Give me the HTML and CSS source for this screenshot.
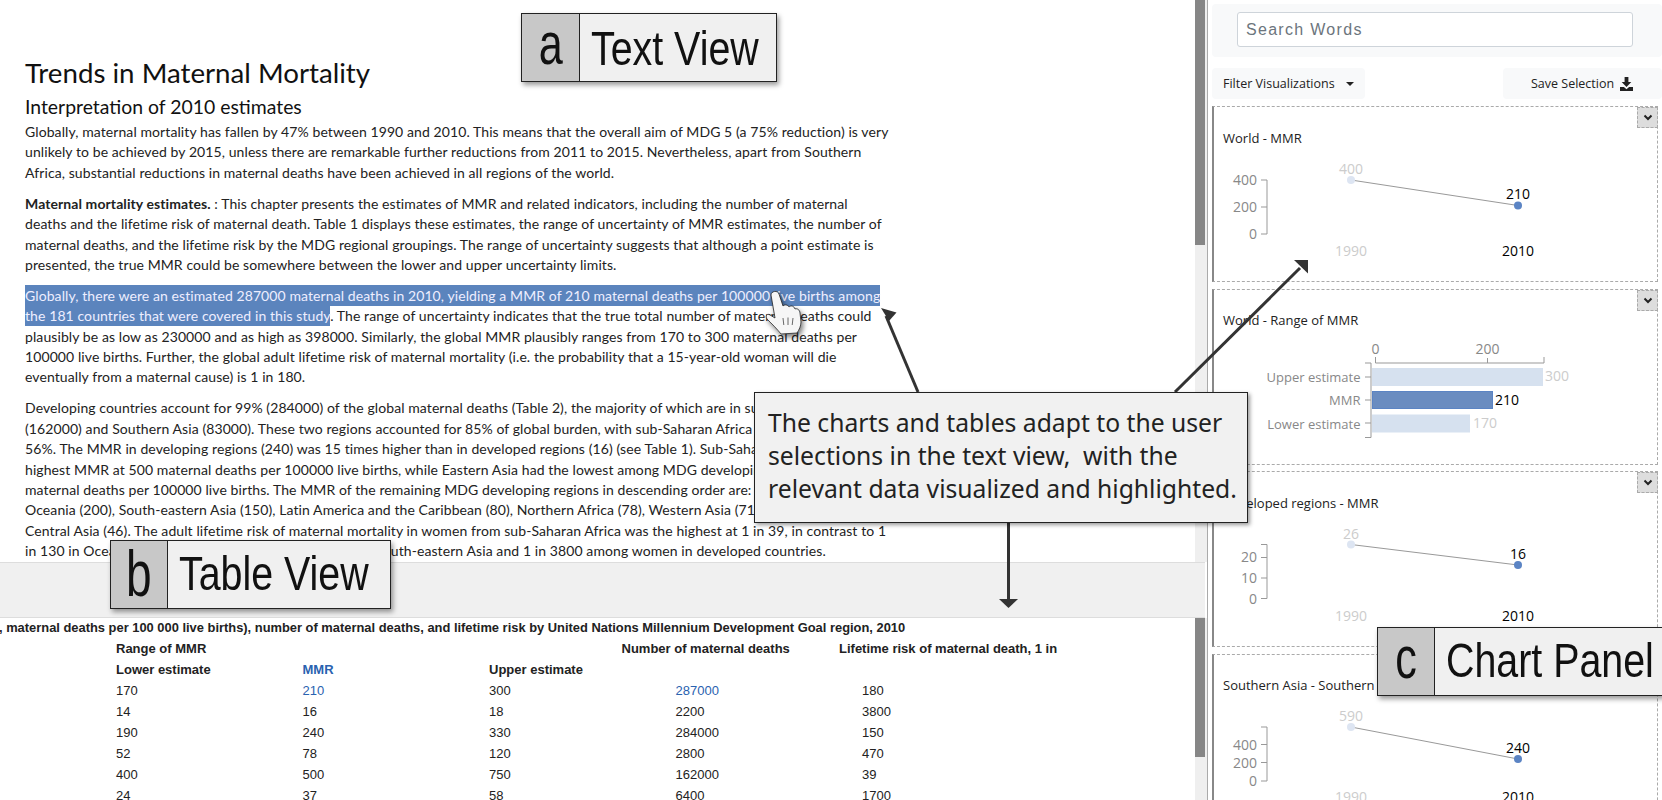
FILE: index.html
```html
<!DOCTYPE html>
<html lang="en">
<head>
    <meta charset="UTF-8">
    <title>Text View, Table View and Chart Panel</title>
    <link rel="stylesheet" href="styles.css">
</head>
<body>

<div class="page">
    <div class="main">
        <!-- Text view -->
        <div class="text-view">
            <div class="article">
                <h1>Trends in Maternal Mortality</h1>
                <h2>Interpretation of 2010 estimates</h2>
                <p>Globally, maternal mortality has fallen by 47% between 1990 and 2010. This means that the overall aim of MDG 5 (a 75% reduction) is very<br>
                unlikely to be achieved by 2015, unless there are remarkable further reductions from 2011 to 2015. Nevertheless, apart from Southern<br>
                Africa, substantial reductions in maternal deaths have been achieved in all regions of the world.</p>
                <p><b>Maternal mortality estimates.</b> : This chapter presents the estimates of MMR and related indicators, including the number of maternal<br>
                deaths and the lifetime risk of maternal death. Table 1 displays these estimates, the range of uncertainty of MMR estimates, the number of<br>
                maternal deaths, and the lifetime risk by the MDG regional groupings. The range of uncertainty suggests that although a point estimate is<br>
                presented, the true MMR could be somewhere between the lower and upper uncertainty limits.</p>
                <p><span class="selected">Globally, there were an estimated 287000 maternal deaths in 2010, yielding a MMR of 210 maternal deaths per 100000 live births among<br>
                the 181 countries that were covered in this study</span>. The range of uncertainty indicates that the true total number of maternal deaths could<br>
                plausibly be as low as 230000 and as high as 398000. Similarly, the global MMR plausibly ranges from 170 to 300 maternal deaths per<br>
                100000 live births. Further, the global adult lifetime risk of maternal mortality (i.e. the probability that a 15-year-old woman will die<br>
                eventually from a maternal cause) is 1 in 180.</p>
                <p>Developing countries account for 99% (284000) of the global maternal deaths (Table 2), the majority of which are in sub-Saharan Africa<br>
                (162000) and Southern Asia (83000). These two regions accounted for 85% of global burden, with sub-Saharan Africa alone accounting for<br>
                56%. The MMR in developing regions (240) was 15 times higher than in developed regions (16) (see Table 1). Sub-Saharan Africa had the<br>
                highest MMR at 500 maternal deaths per 100000 live births, while Eastern Asia had the lowest among MDG developing regions, at 37<br>
                maternal deaths per 100000 live births. The MMR of the remaining MDG developing regions in descending order are: Southern Asia (220),<br>
                Oceania (200), South-eastern Asia (150), Latin America and the Caribbean (80), Northern Africa (78), Western Asia (71), Caucasus and<br>
                Central Asia (46). The adult lifetime risk of maternal mortality in women from sub-Saharan Africa was the highest at 1 in 39, in contrast to 1<br>
                in 130 in Oceania, 1 in 160 in Southern Asia, 1 in 290 in South-eastern Asia and 1 in 3800 among women in developed countries.</p>
            </div>
            <div class="scrollbar"><div class="thumb thumb-text"></div></div>
        </div>

        <div class="table-bar"></div>

        <!-- Table view -->
        <div class="table-view">
            <div class="table-scroll">
                <div class="caption">, maternal deaths per 100 000 live births), number of maternal deaths, and lifetime risk by United Nations Millennium Development Goal region, 2010</div>
                <div class="grid">
                    <b>Range of MMR</b><span></span><span></span><b class="deaths-head">Number of maternal deaths</b><b class="risk-head">Lifetime risk of maternal death, 1 in</b>
                    <b>Lower estimate</b><b class="blue">MMR</b><b>Upper estimate</b><span></span><span></span>
                    <span>170</span><span class="blue">210</span><span>300</span><span class="blue">287000</span><span>180</span>
                    <span>14</span><span>16</span><span>18</span><span>2200</span><span>3800</span>
                    <span>190</span><span>240</span><span>330</span><span>284000</span><span>150</span>
                    <span>52</span><span>78</span><span>120</span><span>2800</span><span>470</span>
                    <span>400</span><span>500</span><span>750</span><span>162000</span><span>39</span>
                    <span>24</span><span>37</span><span>58</span><span>6400</span><span>1700</span>
                </div>
            </div>
            <div class="scrollbar"><div class="thumb thumb-table"></div></div>
        </div>
    </div>

    <!-- Chart panel -->
    <div class="panel">
        <div class="search-box">
            <input type="text" class="search" placeholder="Search Words">
        </div>
        <div class="toolbar">
            <div class="tool-btn">Filter Visualizations <span class="caret"></span></div>
            <div class="tool-btn save-btn">Save Selection
                <svg class="save-icon" width="13" height="14" viewBox="0 0 13 14"><path d="M4.600 0h3.800v5h2.900L6.500 9.900 1.700 5h2.900z M0 10h3.900l2.600 2.300L9.100 10H13v4H0z" fill="#222"/></svg>
            </div>
        </div>

        <div class="card card-1">
            <div class="chevron"><svg width="10" height="7" viewBox="0 0 10 7"><path d="M1.500 1.500L5 5l3.500-3.500" fill="none" stroke="#222" stroke-width="2"/></svg></div>
            <div class="card-title">World - MMR</div>
            <svg class="chart" width="446" height="126" viewBox="1212 150 446 126">
                <path class="axis" d="M1261 180h6v54h-6M1261 207h6"/>
                <text class="tick" x="1257" y="185">400</text>
                <text class="tick" x="1257" y="212">200</text>
                <text class="tick" x="1257" y="239">0</text>
                <path class="slope" d="M1351 180L1518 205.500"/>
                <circle class="dot-old" cx="1351" cy="180" r="4"/>
                <circle class="dot-new" cx="1518" cy="205.500" r="4"/>
                <text class="val-old" x="1351" y="174">400</text>
                <text class="val-new" x="1518" y="199">210</text>
                <text class="val-old" x="1351" y="256">1990</text>
                <text class="val-new" x="1518" y="256">2010</text>
            </svg>
        </div>

        <div class="card card-2">
            <div class="chevron"><svg width="10" height="7" viewBox="0 0 10 7"><path d="M1.500 1.500L5 5l3.500-3.500" fill="none" stroke="#222" stroke-width="2"/></svg></div>
            <div class="card-title">World - Range of MMR</div>
            <svg class="chart" width="446" height="126" viewBox="1212 332 446 126">
                <text class="val-axis" x="1375.500" y="353">0</text>
                <text class="val-axis" x="1487.500" y="353">200</text>
                <path class="axis" d="M1375.500 356v6H1544v-6M1487.500 357v5"/>
                <path class="axis" d="M1365 362h6v74.500h-6M1365 376h6M1365 399h6M1365 422h6"/>
                <rect class="bar-old" x="1372" y="367" width="171" height="18"/>
                <rect class="bar-new" x="1372.500" y="390.500" width="120" height="17"/>
                <rect class="bar-old" x="1372" y="413.500" width="98" height="18"/>
                <text class="tick bar-label" x="1360.500" y="381">Upper estimate</text>
                <text class="tick bar-label" x="1360.500" y="404">MMR</text>
                <text class="tick bar-label" x="1360.500" y="428">Lower estimate</text>
                <text class="bar-val-old" x="1545" y="380">300</text>
                <text class="bar-val-new" x="1495" y="404">210</text>
                <text class="bar-val-old" x="1473" y="427">170</text>
            </svg>
        </div>

        <div class="card card-3">
            <div class="chevron"><svg width="10" height="7" viewBox="0 0 10 7"><path d="M1.500 1.500L5 5l3.500-3.500" fill="none" stroke="#222" stroke-width="2"/></svg></div>
            <div class="card-title">Developed regions - MMR</div>
            <svg class="chart" width="446" height="126" viewBox="1212 515 446 126">
                <path class="axis" d="M1261 544.500h6v54h-6M1261 557.500h6M1261 578h6"/>
                <text class="tick" x="1257" y="562">20</text>
                <text class="tick" x="1257" y="583">10</text>
                <text class="tick" x="1257" y="603.500">0</text>
                <path class="slope" d="M1351 544.500L1518 565"/>
                <circle class="dot-old" cx="1351" cy="544.500" r="4"/>
                <circle class="dot-new" cx="1518" cy="565" r="4"/>
                <text class="val-old" x="1351" y="539">26</text>
                <text class="val-new" x="1518" y="559">16</text>
                <text class="val-old" x="1351" y="621">1990</text>
                <text class="val-new" x="1518" y="621">2010</text>
            </svg>
        </div>

        <div class="card card-4">
            <div class="card-title">Southern Asia - Southern Asia</div>
            <svg class="chart" width="446" height="126" viewBox="1212 698 446 126">
                <path class="axis" d="M1261 727h6v54h-6M1261 744.500h6M1261 762.500h6"/>
                <text class="tick" x="1257" y="749.500">400</text>
                <text class="tick" x="1257" y="767.500">200</text>
                <text class="tick" x="1257" y="786">0</text>
                <path class="slope" d="M1351 727L1518 759"/>
                <circle class="dot-old" cx="1351" cy="727" r="4"/>
                <circle class="dot-new" cx="1518" cy="759" r="4"/>
                <text class="val-old" x="1351" y="721">590</text>
                <text class="val-new" x="1518" y="753">240</text>
                <text class="val-old" x="1351" y="802">1990</text>
                <text class="val-new" x="1518" y="802">2010</text>
            </svg>
        </div>
    </div>
</div>

<!-- Annotations laid over the screenshot -->
<svg class="arrows" width="1662" height="800" viewBox="0 0 1662 800">
    <defs>
        <filter id="hand-shadow" x="-30%" y="-30%" width="170%" height="170%">
            <feDropShadow dx="2" dy="3" stdDeviation="2.500" flood-color="#000" flood-opacity="0.5"/>
        </filter>
    </defs>
    <path class="arrow-line" d="M918 392L886 316"/>
    <path class="arrow-head" d="M881 308L896.500 312.500L889 321z"/>
    <path class="arrow-line" d="M1175 392L1300 268"/>
    <path class="arrow-head" d="M1294 260H1308V273.500z"/>
    <path class="arrow-line" d="M1008.500 523V600"/>
    <path class="arrow-head" d="M999 599H1018L1008.500 608z"/>
    <path class="hand" filter="url(#hand-shadow)" d="M771 295C771 291 778 290 779 294L783 306C785 304 788 305 789 307C791 305 794 306 795 309C797 308 800 310 800 313L801 322C801 326 799 330 797 333L781 334C778 330 772 324 767 319C765 316 767 313 770 315L775 318z"/>
    <path class="hand-lines" d="M783 318l.8 7M788 317.500l0 7.500M793 318l-.8 7"/>
</svg>

<div class="tag tag-a"><span class="tag-letter"><span class="tag-glyph">a</span></span><span class="tag-name">Text View</span></div>
<div class="tag tag-b"><span class="tag-letter"><span class="tag-glyph">b</span></span><span class="tag-name">Table View</span></div>
<div class="tag tag-c"><span class="tag-letter"><span class="tag-glyph">c</span></span><span class="tag-name">Chart Panel</span></div>

<div class="callout">The charts and tables adapt to the user<br>selections in the text view, &nbsp;with the<br>relevant data visualized and highlighted.</div>

</body>
</html>
```

FILE: styles.css
```css
html, body {
    margin: 0;
    padding: 0;
    height: 800px;
    overflow: hidden;
    background-color: #fff;
}
.page {
    display: flex;
    width: 1662px;
    height: 800px;
    overflow: hidden;
}
.main {
    width: 1207px;
    flex-shrink: 0;
    display: flex;
    flex-direction: column;
}

/* text view */
.text-view {
    display: flex;
    height: 562px;
    overflow: hidden;
}
.article {
    flex: 1;
    padding: 54px 0 0 25px;
    font-family: "Lato", sans-serif;
    color: #222;
    white-space: nowrap;
    overflow: hidden;
}
h1 {
    margin: 0;
    font-size: 27.700px;
    font-weight: 400;
    line-height: 38px;
    color: #111;
}
h2 {
    margin: 0;
    font-size: 19.400px;
    font-weight: 400;
    line-height: 30px;
    color: #111;
}
p {
    margin: 0 0 10.500px;
    font-size: 14px;
    line-height: 20.400px;
    letter-spacing: 0.090px;
}
.selected {
    background-color: #5b84bd;
    color: #eef;
    padding: 2px 0;
}
.scrollbar {
    width: 12px;
    flex-shrink: 0;
    background-color: #efefef;
    box-sizing: border-box;
    padding-right: 2px;
}
.thumb {
    background-color: #868686;
}
.thumb-text {
    height: 245px;
}
.thumb-table {
    height: 139px;
}

/* table view */
.table-bar {
    height: 54px;
    background-color: #f0f0f0;
    border-top: 1px solid #ddd;
    border-bottom: 1px solid #ddd;
    margin-right: 2px;
}
.table-view {
    flex: 1;
    display: flex;
    overflow: hidden;
}
.table-scroll {
    flex: 1;
    overflow: hidden;
    font-family: "Liberation Sans", Arial, sans-serif;
    font-size: 13px;
    color: #222;
}
.caption {
    font-size: 12.900px;
    font-weight: bold;
    line-height: 20px;
    white-space: nowrap;
    margin-left: -1px;
}
.grid {
    display: grid;
    grid-template-columns: 186.500px 186.500px 186.500px 186.500px 200px;
    grid-auto-rows: 21px;
    align-items: center;
    padding: 0 0 0 116px;
    white-space: nowrap;
}
.blue {
    color: #2a62b0;
}
.deaths-head {
    margin-left: -54px;
}
.risk-head {
    margin-left: -23px;
}

/* chart panel */
.panel {
    flex: 1;
    border-left: 1px solid #aaa;
    padding-left: 4px;
    font-family: "Open Sans", sans-serif;
    color: #222;
    min-width: 0;
}
.search-box {
    margin-top: 4px;
    height: 53px;
    background-color: #f8f9fa;
    border-radius: 4px;
    padding: 8px 29px 0 25px;
    box-sizing: border-box;
}
.search {
    display: block;
    width: 100%;
    height: 35px;
    box-sizing: border-box;
    padding: 0 8px;
    border: 1px solid #ced4da;
    border-radius: 3px;
    font-family: "Liberation Sans", Arial, sans-serif;
    font-size: 16px;
    letter-spacing: 1.300px;
    background-color: #fff;
}
.search::placeholder {
    color: #6c757d;
    opacity: 1;
}
.toolbar {
    display: flex;
    justify-content: space-between;
    margin-top: 11px;
    margin-bottom: 7px;
}
.tool-btn {
    height: 31px;
    line-height: 30px;
    padding: 0 11px;
    background-color: #f8f9fa;
    border-radius: 4px;
    font-size: 12.500px;
    display: flex;
    align-items: center;
    gap: 11px;
}
.save-btn {
    width: 159px;
    box-sizing: border-box;
    padding-left: 28px;
    gap: 6px;
}
.caret {
    width: 0;
    height: 0;
    border-left: 4px solid transparent;
    border-right: 4px solid transparent;
    border-top: 4px solid #222;
}
.card {
    position: relative;
    width: 446px;
    height: 176px;
    box-sizing: border-box;
    border: 1px dashed #aaa;
    border-left: 2px solid #888;
    margin-bottom: 6.500px;
}
.card-title {
    padding: 21.500px 0 0 9px;
    height: 21.500px;
    line-height: 18px;
    font-size: 13px;
}
.chart {
    display: block;
    margin: 0 0 0 -2px;
}
.chevron {
    position: absolute;
    top: 0;
    right: -1px;
    width: 21px;
    height: 21px;
    box-sizing: border-box;
    background-color: #ddd;
    border: 1px dashed #aaa;
    display: flex;
    align-items: center;
    justify-content: center;
}
.axis {
    fill: none;
    stroke: #999;
    stroke-width: 1;
}
.slope {
    fill: none;
    stroke: #999;
    stroke-width: 1;
}
.tick {
    font-size: 14px;
    fill: #888;
    text-anchor: end;
}
.bar-label {
    font-size: 13px;
}
.val-old, .val-new {
    font-size: 14px;
    text-anchor: middle;
}
.val-old {
    fill: #ccc;
}
.val-new {
    fill: #000;
}
.val-axis {
    font-size: 14px;
    fill: #888;
    text-anchor: middle;
}
.bar-val-old, .bar-val-new {
    font-size: 14px;
}
.bar-val-old {
    fill: #ccc;
}
.bar-val-new {
    fill: #000;
}
.dot-old {
    fill: #dde5f2;
}
.dot-new {
    fill: #5b84c4;
}
.bar-old {
    fill: #d6e1ef;
}
.bar-new {
    fill: #6a8cc0;
    stroke: #5b84c4;
}

/* annotations */
.arrows {
    position: absolute;
    left: 0;
    top: 0;
    pointer-events: none;
}
.arrow-line {
    fill: none;
    stroke: #333;
    stroke-width: 3;
}
.arrow-head {
    fill: #333;
}
.hand {
    fill: #f6f6f6;
    stroke: #222;
    stroke-width: 0.800;
}
.hand-lines {
    fill: none;
    stroke: #444;
    stroke-width: 0.800;
}
.tag {
    position: absolute;
    display: flex;
    box-sizing: border-box;
    height: 69px;
    background-color: #f0f0f0;
    border: 1.500px solid #222;
    box-shadow: 2px 3px 5px rgba(0, 0, 0, 0.4);
    font-family: "Liberation Sans", sans-serif;
    color: #111;
    overflow: hidden;
}
.tag-letter {
    background-color: #c8c8c8;
    border-right: 1.500px solid #222;
    text-align: center;
    font-size: 60px;
    line-height: 60px;
    flex-shrink: 0;
}
.tag-glyph {
    display: inline-block;
    transform: scaleX(0.72);
}
.tag-name {
    display: block;
    font-size: 48px;
    line-height: 66px;
    margin-left: 11px;
    white-space: nowrap;
    transform: scaleX(0.82);
    transform-origin: left center;
}
.tag-a {
    left: 521px;
    top: 13px;
    width: 256px;
}
.tag-a .tag-letter {
    width: 57px;
}
.tag-a .tag-name {
    line-height: 70px;
}
.tag-b {
    left: 110px;
    top: 540px;
    width: 281px;
}
.tag-b .tag-letter {
    width: 56px;
    font-size: 64px;
    line-height: 66px;
}
.tag-c {
    left: 1377px;
    top: 627px;
    width: 287px;
}
.tag-c .tag-letter {
    width: 56px;
}
.callout {
    position: absolute;
    left: 754px;
    top: 392px;
    width: 494px;
    height: 131px;
    box-sizing: border-box;
    padding: 13px 0 0 13px;
    background-color: #f1f1f1;
    border: 1.500px solid #222;
    box-shadow: 2px 2px 4px rgba(0, 0, 0, 0.4);
    font-family: "Noto Sans", sans-serif;
    font-size: 24.700px;
    line-height: 33px;
    color: #222;
    white-space: nowrap;
}
```
